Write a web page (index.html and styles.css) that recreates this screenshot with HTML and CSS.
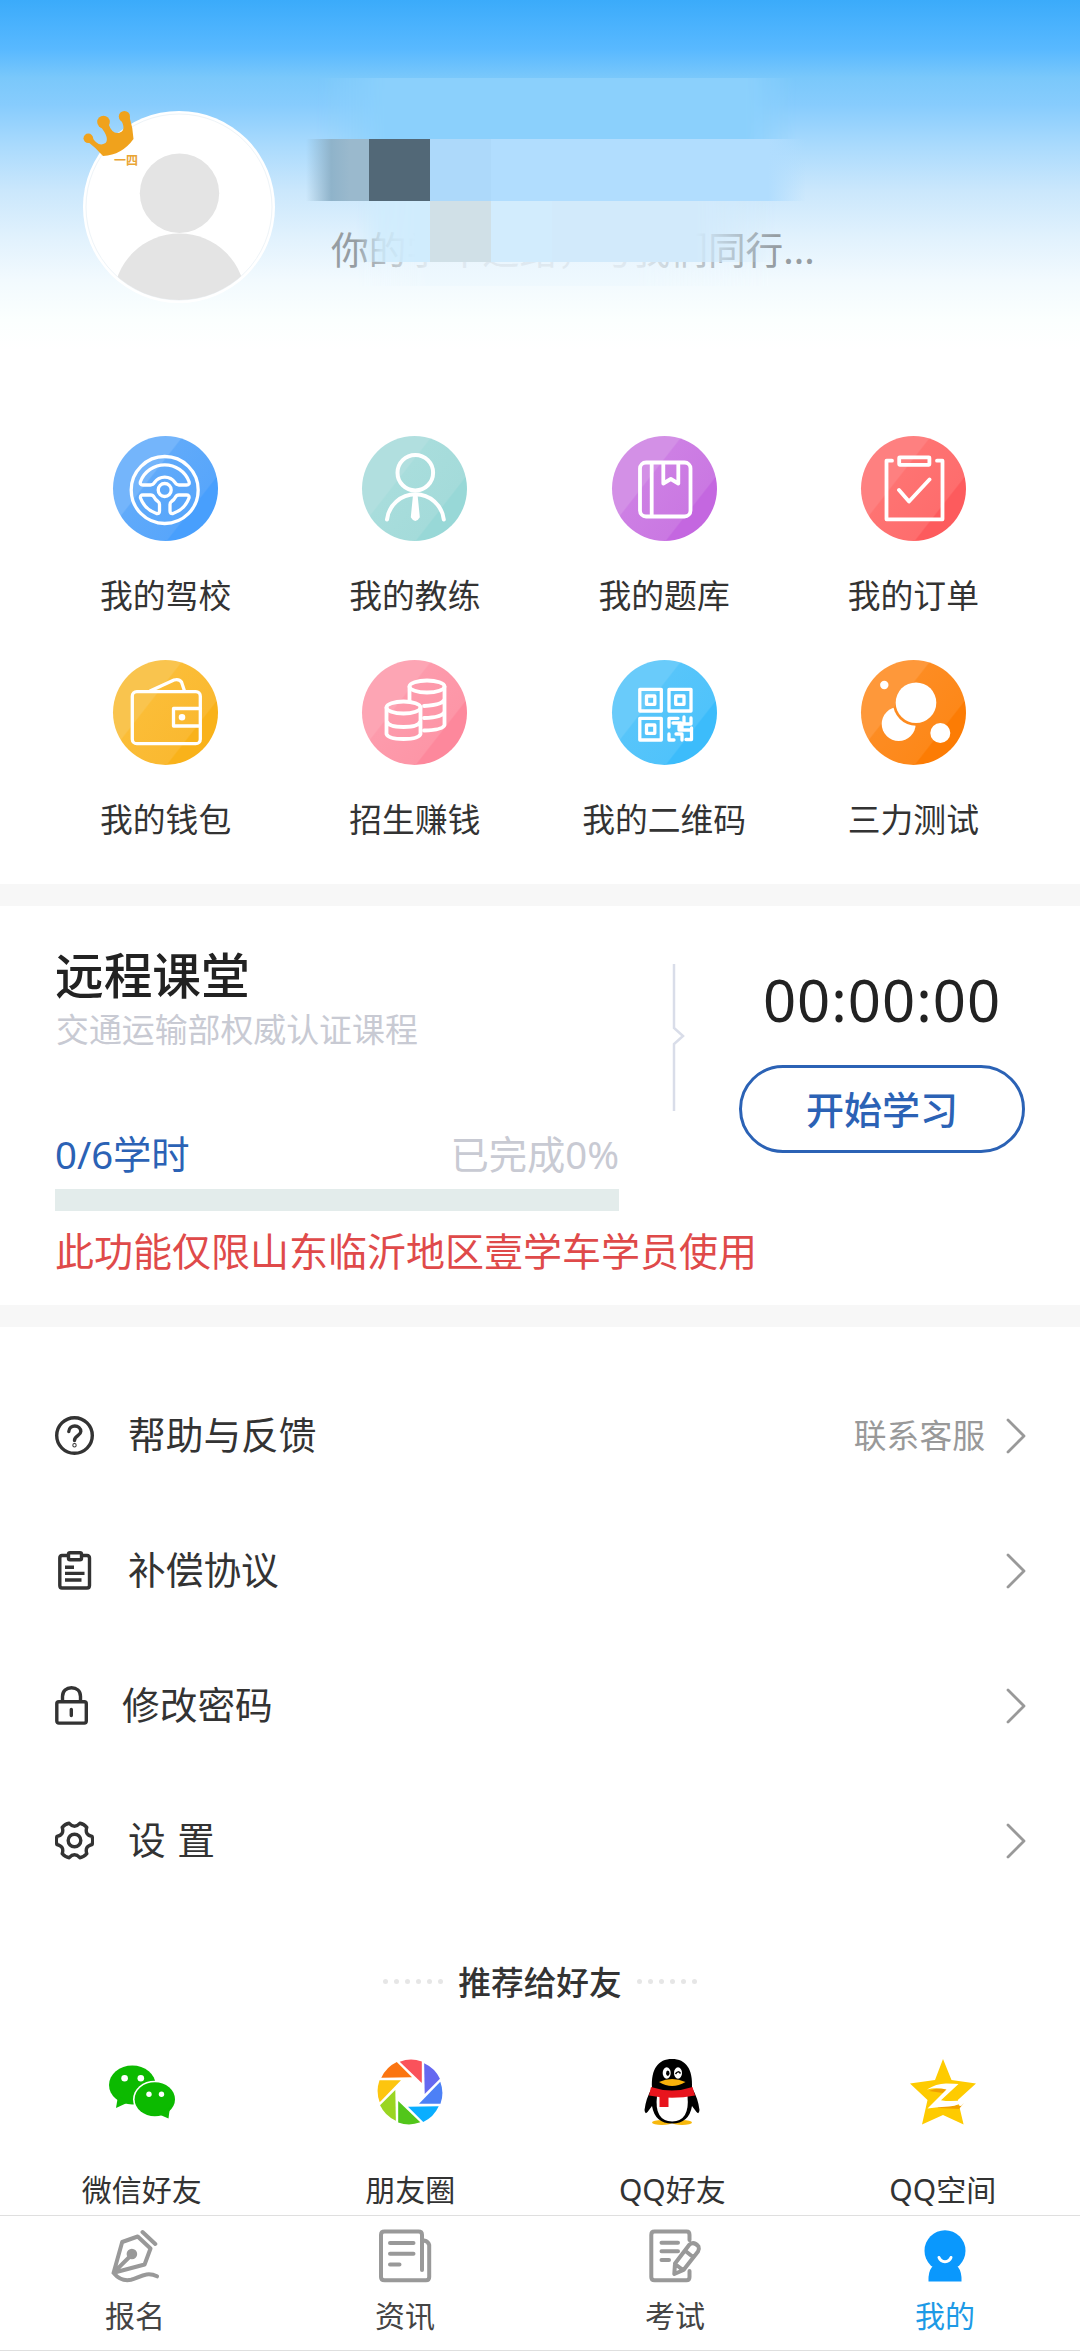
FILE: index.html
```html
<!DOCTYPE html>
<html lang="zh-CN">
<head>
<meta charset="utf-8">
<title>我的</title>
<link rel="stylesheet" href="styles.css">
</head>
<body>
<div class="page">
  <header class="hero">
    <div class="avatar">
      <svg width="192" height="192" viewBox="0 0 192 192">
        <defs><clipPath id="face"><circle cx="96" cy="96" r="93"/></clipPath></defs>
        <circle cx="96" cy="96" r="96" fill="#fff"/>
        <circle cx="96" cy="96" r="93" fill="none" stroke="#eef4f8"/>
        <g clip-path="url(#face)" fill="#e4e4e4">
          <circle cx="96.500" cy="82.300" r="39.700"/>
          <circle cx="96.500" cy="188.500" r="66"/>
        </g>
      </svg>
      <svg class="crown" width="52" height="48" viewBox="83 110 52 48" fill="#f0a21c">
        <circle cx="88.300" cy="138.300" r="4.800"/><circle cx="103.500" cy="122" r="6.300"/><circle cx="124.400" cy="116.500" r="5.600"/>
        <path d="M87 141Q95 147 103 156Q122 155 133.500 139Q133 128 129.500 117L121 120Q127 131 118.500 133Q112 134 108.500 124L100 126Q110 138 105.500 143Q98 148 91.500 136Z"/>
      </svg>
      <span class="level">一四</span>
    </div>
    <p class="slogan">你的学车之路，与我们同行...</p>
    <div class="mosaic">
      <div class="band band-top"></div>
      <div class="band band-name"><i></i><i></i><i></i><i></i></div>
      <div class="band band-slogan"><i></i><i></i><i></i><i></i></div>
      <div class="band band-haze"></div>
    </div>
  </header>

  <section class="grid">
    <a class="tile"><span class="disc blue"><svg viewBox="0 0 105 105"><circle cx="51.700" cy="54" r="33.500"/><circle cx="51.700" cy="54" r="6.500"/><path d="M30 49Q26.500 49 27.500 45.500A26 26 0 0 1 76 45.500Q77 49 73.500 49H66Q63.500 49 62 46.500A12.500 12.500 0 0 0 41.500 46.500Q40 49 37.500 49ZM30 59H37.500Q40 59 41 61Q42.500 64 45 65.500Q46.500 66.500 46.500 68.500V75Q46.500 78 43.500 77.500A26 26 0 0 1 27.500 62Q27 59 30 59ZM73.500 59H66Q63.500 59 62.500 61Q61 64 58.500 65.500Q57 66.500 57 68.500V75Q57 78 60 77.500A26 26 0 0 0 76 62Q76.500 59 73.500 59Z"/></svg></span><span>我的驾校</span></a>
    <a class="tile"><span class="disc teal"><svg viewBox="0 0 105 105" stroke-width="4"><circle cx="53.300" cy="36.700" r="17.800"/><path d="M25 83.500A28.600 28.600 0 0 1 81.800 83.500"/><path class="solid" d="M52 59H54.600L56.800 81Q53.300 87 49.800 81Z"/></svg></span><span>我的教练</span></a>
    <a class="tile"><span class="disc purple"><svg viewBox="0 0 105 105" stroke-width="3.800"><rect x="28" y="26.500" width="50.500" height="54" rx="6"/><path d="M39.700 27V80M51.300 27V47.500L58.800 43L66.300 47.500V27"/></svg></span><span>我的题库</span></a>
    <a class="tile"><span class="disc red"><svg viewBox="0 0 105 105" stroke-width="3.800"><path d="M31 24.700H25.500V83.300H81.500V24.700H76M38 54L48 65.500L68.500 43.500"/><rect x="38.200" y="21.300" width="30.200" height="7.500" rx=".5"/></svg></span><span>我的订单</span></a>
    <a class="tile"><span class="disc yellow"><svg viewBox="0 0 105 105"><rect x="19.300" y="31.700" width="68" height="52" rx="4.500"/><path d="M37 31L61 20Q66 18.500 68.500 22L71.500 31M87 48.500H60.500V66H87"/><circle class="solid" cx="69" cy="57.300" r="2.300"/></svg></span><span>我的钱包</span></a>
    <a class="tile"><span class="disc pink"><svg viewBox="0 0 105 105" stroke-width="3.800"><ellipse cx="41.500" cy="47.500" rx="17" ry="6"/><path d="M24.500 47.500V74Q26 79 41.500 79T58.500 74V47.500M24.500 61Q26 67 41.500 67T58.500 61"/><ellipse cx="65" cy="26.500" rx="17.500" ry="6"/><path d="M47.500 26.500V41M82.500 26.500V65Q81 70 62 70.500M82.500 39Q81 45 62 46M82.500 51.500Q81 57.500 62 58"/></svg></span><span>招生赚钱</span></a>
    <a class="tile"><span class="disc sky"><svg viewBox="0 0 105 105" stroke-width="3.300" stroke-linejoin="miter" stroke-linecap="butt"><path d="M27.800 29.300H49.300V51H27.800ZM34.500 36H42.800V44.300H34.500ZM57 29.300H79V51H57ZM63.700 36H72V44.300H63.700ZM27.800 58.300H49.300V80H27.800ZM34.500 65H42.800V73.300H34.500ZM57 67V58.300H66M61 63H69M72 57V64H79V58M67 66V70H78M57 74V80H62M64 74H70V80M74 79.500H79.500V68M70 64V68"/></svg></span><span>我的二维码</span></a>
    <a class="tile"><span class="disc orange"><svg viewBox="0 0 105 105"><defs><mask id="crescent"><rect width="105" height="105" fill="#fff"/><circle cx="55" cy="42.700" r="23" fill="#000" stroke="none"/></mask></defs><g fill="#fff" stroke="none"><circle cx="55" cy="42.700" r="20.300"/><circle cx="23.300" cy="25" r="4.200"/><circle cx="79.300" cy="73" r="10"/><circle cx="37.700" cy="64" r="17" mask="url(#crescent)"/></g></svg></span><span>三力测试</span></a>
  </section>

  <section class="course">
    <div class="course-main">
      <h2>远程课堂</h2>
      <p class="sub">交通运输部权威认证课程</p>
      <div class="hours"><span class="done">0/6学时</span><span class="pct">已完成0%</span></div>
      <div class="bar"></div>
      <p class="notice">此功能仅限山东临沂地区壹学车学员使用</p>
    </div>
    <svg class="split" width="14" height="147" viewBox="0 0 14 147"><path d="M2 0V64L11 72L2 80V147"/></svg>
    <div class="course-side">
      <div class="timer">00:00:00</div>
      <a class="start">开始学习</a>
    </div>
  </section>

  <section class="menu">
    <a class="row">
      <svg width="39" height="39" viewBox="0 0 39 39"><circle cx="19.500" cy="19.500" r="17.800"/><path d="M13.800 15.500C14 11.500 17 10 19.800 10C23 10 25.800 12 25.800 15.500C25.800 19.500 19.500 20 19.500 24.500"/><circle cx="19.500" cy="29.200" r=".5"/></svg>
      <span class="label">帮助与反馈</span><span class="extra">联系客服</span>
      <svg class="chev" width="20" height="36" viewBox="0 0 20 36"><path d="M2 2L18 18L2 34"/></svg>
    </a>
    <a class="row">
      <svg width="39" height="39" viewBox="0 0 39 39"><path d="M13 4.500H7Q4.800 4.500 4.800 7V34.500Q4.800 37 7 37H32Q34.500 37 34.500 34.500V7Q34.500 4.500 32 4.500H27"/><rect x="13.500" y="1.800" width="13" height="7" rx="1.500"/><path class="flat" d="M10 16.200H19M10 22.400H29.500M10 29H26.500"/></svg>
      <span class="label">补偿协议</span>
      <svg class="chev" width="20" height="36" viewBox="0 0 20 36"><path d="M2 2L18 18L2 34"/></svg>
    </a>
    <a class="row">
      <svg width="33" height="39" viewBox="0 0 33 39"><rect x="1.800" y="15.800" width="29.500" height="21.300" rx="2"/><path d="M7.500 15V10.500C7.500 5 11.500 1.800 16.500 1.800S25.500 5 25.500 10.500V15M16.300 23.500V29.500"/></svg>
      <span class="label">修改密码</span>
      <svg class="chev" width="20" height="36" viewBox="0 0 20 36"><path d="M2 2L18 18L2 34"/></svg>
    </a>
    <a class="row">
      <svg width="39" height="39" viewBox="0 0 39 39"><path d="M37 15.400Q38.500 19.500 37 23.600Q29.400 25.200 31.800 32.700Q29 36 24.800 36.700Q19.500 30.900 14.200 36.700Q10 36 7.200 32.700Q9.600 25.200 2 23.600Q.5 19.500 2 15.400Q9.600 13.800 7.200 6.300Q10 3 14.200 2.300Q19.500 8.100 24.800 2.300Q29 3 31.800 6.300Q29.400 13.800 37 15.400Z"/><circle cx="19.500" cy="19.500" r="6.300"/></svg>
      <span class="label">设 置</span>
      <svg class="chev" width="20" height="36" viewBox="0 0 20 36"><path d="M2 2L18 18L2 34"/></svg>
    </a>
  </section>

  <section class="share">
    <div class="share-title">
      <span class="dots"><i></i><i></i><i></i><i></i><i></i><i></i></span>
      <h3>推荐给好友</h3>
      <span class="dots"><i></i><i></i><i></i><i></i><i></i><i></i></span>
    </div>
    <div class="share-list">
      <a class="share-item">
        <svg width="66" height="66" viewBox="0 0 66 66"><g fill="#0cba00"><ellipse cx="23.300" cy="26" rx="23.300" ry="19.500"/><path d="M9 37L7 49L20 43Z"/></g><ellipse cx="45.800" cy="40.300" rx="21.800" ry="18.600" fill="#fff"/><g fill="#0cba00"><ellipse cx="45.800" cy="40.300" rx="20.200" ry="17"/><path d="M61 48L59.500 59.500L49 55Z"/></g><g fill="#fff"><circle cx="15.600" cy="19.300" r="3.300"/><circle cx="31.800" cy="19.300" r="3.300"/><circle cx="40" cy="35.300" r="2.700"/><circle cx="52.500" cy="35.300" r="2.700"/></g></svg>
        <span>微信好友</span>
      </a>
      <a class="share-item">
        <svg width="66" height="66" viewBox="-33 -33 66 66">
          <defs><path id="blade" d="M-10.300 -30.300A32 32 0 0 1 11.800 -30.500V-9Z"/></defs>
          <use href="#blade" fill="#fa525b"/><use href="#blade" fill="#6668f0" transform="rotate(45)"/><use href="#blade" fill="#4c80f6" transform="rotate(90)"/><use href="#blade" fill="#0aaeff" transform="rotate(135)"/><use href="#blade" fill="#52c61a" transform="rotate(180)"/><use href="#blade" fill="#9ad522" transform="rotate(225)"/><use href="#blade" fill="#fdc50f" transform="rotate(270)"/><use href="#blade" fill="#fb7511" transform="rotate(315)"/>
        </svg>
        <span>朋友圈</span>
      </a>
      <a class="share-item">
        <svg width="56" height="66" viewBox="0 0 56 66"><ellipse cx="18" cy="63.500" rx="10" ry="2.500" fill="#f7b80d"/><ellipse cx="38" cy="63.500" rx="10" ry="2.500" fill="#f7b80d"/><path d="M8 29C7 10 14 0 28 0S49 10 48 29Q54 39 55.500 51Q55 56 52.500 53L48 47Q45 64.500 28 64.500T8 47L3.500 53Q1 56 .5 51Q2 39 8 29Z"/><path d="M13 37H43.500Q46 62 28.200 62.500Q10 62 13 37Z" fill="#fff"/><path d="M7 28Q28 35 48.500 28L51 36.500Q28 41 5 36.500Z" fill="#e8141d"/><path d="M15.500 37H24.500V48H15.500Z" fill="#e8141d"/><ellipse cx="22.700" cy="14" rx="4" ry="5.700" fill="#fff"/><ellipse cx="34" cy="14" rx="4" ry="5.700" fill="#fff"/><ellipse cx="23.800" cy="14.300" rx="1.700" ry="2.700"/><path d="M31.500 15Q34 11 36.500 14.500" fill="none" stroke="#000" stroke-width="1.500"/><path d="M15 23Q28 17 41.500 23Q28 31 15 23Z" fill="#f9b20b"/></svg>
        <span>QQ好友</span>
      </a>
      <a class="share-item">
        <svg width="66" height="66" viewBox="0 0 66 66"><path d="M33 0L41.500 21L66 24.500L47.800 41L53.600 65.500L33 56L12 65.500L17.500 41L0 24.500L25 21Z" fill="#fecb00"/><path d="M28 42L51 47L54 44L49 50L28 49Z" fill="#f0a000"/><path d="M19 32Q28 28 37 30L33 34Z" fill="#f0a000"/><path d="M17 30.500Q26 24.500 36 24.500T48.500 25L31 41.200Q42 43.200 55 40.500Q51 46.500 39 47.500Q28 48 17.500 49.500L36.500 30.500Q26 28 17 30.500Z" fill="#fff"/></svg>
        <span>QQ空间</span>
      </a>
    </div>
  </section>

  <nav class="tabs">
    <a class="tab"><svg width="56" height="54" viewBox="0 0 56 54"><path d="M6.600 43.700L15.200 13L30.700 7.500L43.500 19.500L37.600 35.500L6.600 43.700L24.900 25.500M35.500 3L48.300 15M6.600 44C12 50.500 18 52 24 50.800C32 49 39 42 50 47.300"/><circle cx="24.900" cy="25" r="3.300" fill="#999"/></svg><span>报名</span></a>
    <a class="tab"><svg width="56" height="54" viewBox="0 0 56 54"><path d="M45 41V6Q45 2.600 41.500 2.600H7.500Q4 2.600 4 6V48Q4 51.300 7.500 51.300H49Q52.200 51.300 52.200 48V16Q51.500 12.500 47 11.500M13 14H36.500M13 24.800H36.500M13 35.500H22.500"/></svg><span>资讯</span></a>
    <a class="tab"><svg width="56" height="54" viewBox="0 0 56 54"><path d="M42.500 11V6Q42.500 2.600 39.500 2.600H7.500Q4.300 2.600 4.300 6V48Q4.300 51.300 7.500 51.300H39.500Q42.500 51.300 42.500 48V42M14.500 13.800H31M14.500 22.300H31M14.500 31H22M27.300 45L28 34.500L42.500 15.500Q47 12 51.500 17.500Q52.500 20 51 22.500L36.500 41ZM38.500 22L46 28M28 35L36 41"/></svg><span>考试</span></a>
    <a class="tab active"><svg width="56" height="54" viewBox="0 0 56 54"><g fill="#0a98fd" stroke="none"><circle cx="28" cy="21.700" r="20.500"/><path d="M15 38H41Q45 43 44.500 52.500H11.500Q11 43 15 38Z"/></g><path class="smile" d="M22 28.500C24 34 32 34 34 28.500"/></svg><span>我的</span></a>
  </nav>
</div>
</body>
</html>
```
FILE: styles.css
```css
* { box-sizing: border-box; }

body {
  margin: 0;
  background: #fff;
  color: #333;
  font-family: "Noto Sans CJK SC", sans-serif;
}

h2, h3, p { margin: 0; }
svg { display: block; }

.page {
  width: 1080px;
  height: 2351px;
  display: flex;
  flex-direction: column;
  overflow: hidden;
}

/* Header */
.hero {
  position: relative;
  height: 436px;
  flex: none;
  display: flex;
  padding: 111px 0 0 83px;
  background: linear-gradient(#3babfa 0, #4ab2fd 25px, #59b9ff 50px, #7ac8fb 78px, #87ccfd 105px, #a9dafd 145px, #cae7fc 190px, #e0f1fd 235px, #f2fafe 280px, #fbfffe 320px, #fff 350px);
}

.avatar { position: relative; width: 192px; height: 192px; }
.crown { position: absolute; left: 0; top: -1px; }
.level {
  position: absolute;
  left: 31px;
  top: 40px;
  font-size: 12px;
  line-height: 18px;
  font-weight: 700;
  color: #e9a534;
}

.slogan {
  margin: 109px 0 0 56px;
  font-size: 37.700px;
  line-height: 56px;
  height: 56px;
  color: #969da2;
  white-space: nowrap;
}

.mosaic { position: absolute; left: 306px; top: 78px; width: 500px; }
.band { display: flex; height: 61px; }
.band-top {
  background: #8bd0fc;
  -webkit-mask-image: linear-gradient(90deg, transparent 10px, #000 80px, #000 440px, transparent 490px);
  mask-image: linear-gradient(90deg, transparent 10px, #000 80px, #000 440px, transparent 490px);
}
.band-name { height: 62px; }
.band-name i:nth-child(1) { width: 63px; background: linear-gradient(90deg, rgba(152, 184, 205, 0), #8fb3ca 40%, #9ab9cd 70%); }
.band-name i:nth-child(2) { width: 61px; background: #526877; }
.band-name i:nth-child(3) { width: 61px; background: #add9fa; }
.band-name i:nth-child(4) { flex: 1; background: linear-gradient(90deg, #b1ddfe 88%, rgba(177, 221, 254, 0)); }
.band-slogan {
  -webkit-mask-image: linear-gradient(90deg, transparent 50px, rgba(0, 0, 0, .85) 75px, #000 110px, #000 390px, transparent 470px);
  mask-image: linear-gradient(90deg, transparent 50px, rgba(0, 0, 0, .85) 75px, #000 110px, #000 390px, transparent 470px);
}
.band-slogan i:nth-child(1) { width: 124px; background: #d0ecfd; }
.band-slogan i:nth-child(2) { width: 61px; background: #d0e0e7; }
.band-slogan i:nth-child(3) { width: 61px; background: #d2ecfd; }
.band-slogan i:nth-child(4) { flex: 1; background: #d2eafb; }
.band-haze {
  height: 24px;
  background: linear-gradient(#ebf6fe, #eff9fe);
  opacity: .85;
  -webkit-mask-image: linear-gradient(90deg, transparent 50px, #000 120px, #000 330px, transparent 465px);
  mask-image: linear-gradient(90deg, transparent 50px, #000 120px, #000 330px, transparent 465px);
}

/* Shortcut tiles */
.grid {
  flex: none;
  height: 448px;
  display: grid;
  grid-template-columns: repeat(4, 1fr);
  grid-auto-rows: 224px;
  padding: 0 42px 0 41px;
}
.tile {
  display: flex;
  flex-direction: column;
  align-items: center;
  gap: 29px;
  font-size: 32.800px;
  line-height: 48px;
  white-space: nowrap;
}
.disc { width: 105px; height: 105px; border-radius: 50%; }
.disc svg {
  width: 105px;
  height: 105px;
  fill: none;
  stroke: #fff;
  stroke-linecap: round;
  stroke-linejoin: round;
}
.disc svg:not([stroke-width]) { stroke-width: 3.300px; }
.disc .solid { fill: #fff; stroke-width: 2px; }
.blue { background: linear-gradient(128deg, #74b5fb 37%, #60aafa 38%, #58a6fb 72%, #489ffd 73%); }
.teal { background: linear-gradient(128deg, #b1dfdf 37%, #a8dddc 38%, #a4dbda 72%, #98d8d7 73%); }
.purple { background: linear-gradient(128deg, #d390e6 37%, #cd7fe4 38%, #ca78e2 72%, #c467e0 73%); }
.red { background: linear-gradient(128deg, #fe8080 37%, #fe7372 38%, #fe6d6d 72%, #fd5b5d 73%); }
.yellow { background: linear-gradient(128deg, #f9c44e 37%, #fbbd37 38%, #fab931 72%, #f9b21a 73%); }
.pink { background: linear-gradient(128deg, #fda5b4 37%, #fd9bac 38%, #fd96a7 72%, #fd889c 73%); }
.sky { background: linear-gradient(128deg, #69cbfa 37%, #57c5fa 38%, #50c3fb 72%, #3cbcfb 73%); }
.orange { background: linear-gradient(128deg, #fe983a 37%, #fd8c22 38%, #fd8819 72%, #fc7c04 73%); }

/* Remote course card */
.course {
  flex: none;
  height: 443px;
  display: flex;
  border: solid #f7f7f7;
  border-width: 22px 0;
  padding: 38px 55px 0;
}
.course-main { width: 564px; white-space: nowrap; }
.course h2 {
  font-size: 48.700px;
  line-height: 58px;
  font-weight: 500;
  color: #222;
}
.sub { margin-top: 2px; font-size: 32.900px; line-height: 48px; color: #c8cad3; padding-left: 1px; }
.hours {
  display: flex;
  justify-content: space-between;
  margin-top: 74px;
  font-family: "Noto Sans", "Noto Sans CJK SC", sans-serif;
  font-size: 38.300px;
  line-height: 56px;
}
.done { color: #2b62b5; }
.pct { color: #c8cad3; }
.bar { height: 22px; margin-top: 7px; background: #e3eceb; }
.notice { margin-top: 10px; font-size: 39px; line-height: 56px; color: #df4a4a; }
.split { margin: 20px 0 0 53px; flex: none; fill: none; stroke: #d9dde9; stroke-width: 2.500px; }
.course-side {
  width: 286px;
  margin-left: 53px;
  padding-top: 16px;
  display: flex;
  flex-direction: column;
  align-items: center;
}
.timer {
  font-family: "Noto Sans", sans-serif;
  font-size: 58px;
  line-height: 80px;
  letter-spacing: 1px;
  color: #222;
}
.start {
  margin-top: 25px;
  width: 286px;
  height: 88px;
  border: 3px solid #2b62b5;
  border-radius: 44px;
  color: #2b62b5;
  font-size: 38px;
  line-height: 79px;
  font-weight: 500;
  text-align: center;
}

/* Menu */
.menu { flex: none; padding: 41px 54px 0 55px; height: 581px; }
.row { display: flex; align-items: center; height: 135px; }
.row svg {
  flex: none;
  fill: none;
  stroke: #333;
  stroke-width: 3.400px;
  stroke-linecap: round;
  stroke-linejoin: round;
}
.row .flat { stroke-linecap: butt; }
.label { margin: 0 0 5px 34px; font-size: 37.700px; line-height: 56px; word-spacing: 3px; }
.extra { margin: 0 0 4px auto; font-size: 32.800px; line-height: 48px; color: #999; }
.row .chev { margin-left: auto; stroke: #999; stroke-width: 2.800px; }
.row .extra + .chev { margin-left: 21px; }

/* Share */
.share { flex: none; height: 307px; padding-top: 49px; }
.share-title { display: flex; justify-content: center; align-items: center; gap: 15px; height: 48px; }
.share-title h3 { font-size: 32.700px; line-height: 48px; font-weight: 500; }
.dots { display: flex; gap: 6px; }
.dots i { width: 5px; height: 5px; border-radius: 50%; background: #e6e6e6; }
.share-list { display: flex; justify-content: space-around; margin-top: 54px; padding-right: 2px; }
.share-item {
  display: flex;
  flex-direction: column;
  align-items: center;
  gap: 43px;
  font-family: "Noto Sans", "Noto Sans CJK SC", sans-serif;
  font-size: 30px;
  line-height: 44px;
}

/* Bottom tabs */
.tabs {
  flex: none;
  height: 136px;
  display: flex;
  border-top: 1px solid #dfdfdf;
  border-bottom: 1px solid #dfdfdf;
}
.tab {
  flex: 1;
  display: flex;
  flex-direction: column;
  align-items: center;
  gap: 9px;
  padding-top: 13px;
  font-size: 30px;
  line-height: 44px;
  color: #444;
}
.tab svg {
  fill: none;
  stroke: #999;
  stroke-width: 4px;
  stroke-linecap: round;
  stroke-linejoin: round;
}
.tab .smile { stroke: #fff; stroke-width: 3px; }
.tab.active { color: #1d9ae6; }
```
